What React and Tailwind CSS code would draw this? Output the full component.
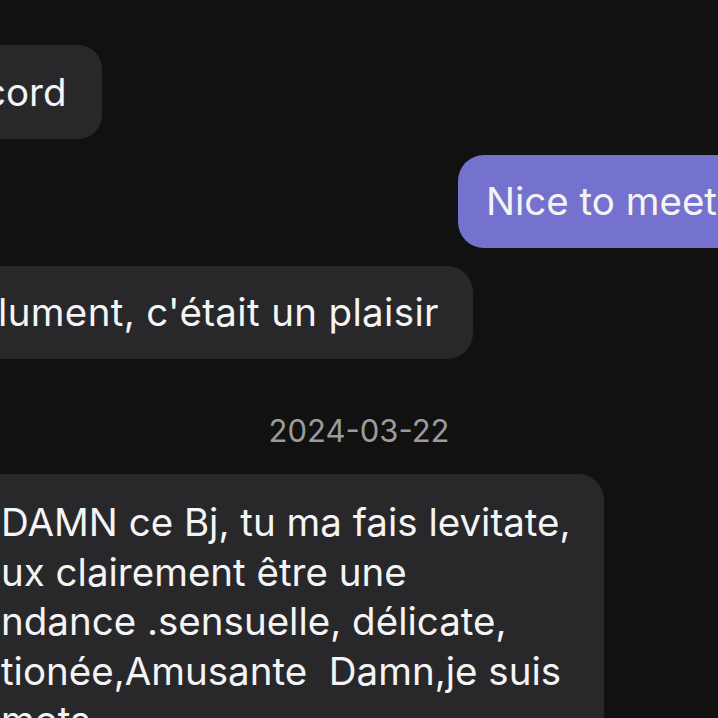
import React from "react";

export default function App() {
  return (
    <div
      className="w-[718px] h-[718px] overflow-hidden bg-[#111111] flex flex-col text-[#f4f4f5]"
      style={{ fontFamily: "Inter, 'Noto Sans', sans-serif" }}
    >
      <div className="mt-[45px] flex">
        <div className="-ml-[40px] pl-[24px] pr-[35px] py-[22px] rounded-[24px] bg-[#28282a] text-[38.5px] leading-[50px]">
          cord
        </div>
      </div>
      <div className="mt-[16px] flex pl-[458px]">
        <div className="pl-[28px] pr-[40px] py-[22px] rounded-l-[26px] bg-[#7472ce] text-[38.5px] leading-[49px] whitespace-nowrap">
          Nice to meet you
        </div>
      </div>
      <div className="mt-[18px] flex">
        <div className="-ml-[40px] pl-[38px] pr-[34px] py-[22px] rounded-[26px] bg-[#28282a] text-[38.5px] leading-[49px] tracking-[0.35px] whitespace-nowrap">
          lument, c'était un plaisir
        </div>
      </div>
      <div className="mt-[52px] flex justify-center">
        <div className="text-[31px] leading-[40px] text-[#9b9b9b]">
          2024-03-22
        </div>
      </div>
      <div className="mt-[23px] flex">
        <div className="-ml-[40px] w-[644px] pl-[41px] pt-[24px] rounded-[26px] bg-[#28282a] text-[38.5px] leading-[49.5px] whitespace-nowrap">
          <div>DAMN ce Bj, tu ma fais levitate,</div>
          <div>ux clairement être une</div>
          <div>ndance .sensuelle, délicate,</div>
          <div>tionée,Amusante&nbsp; Damn,je suis</div>
          <div>mots</div>
        </div>
      </div>
    </div>
  );
}
